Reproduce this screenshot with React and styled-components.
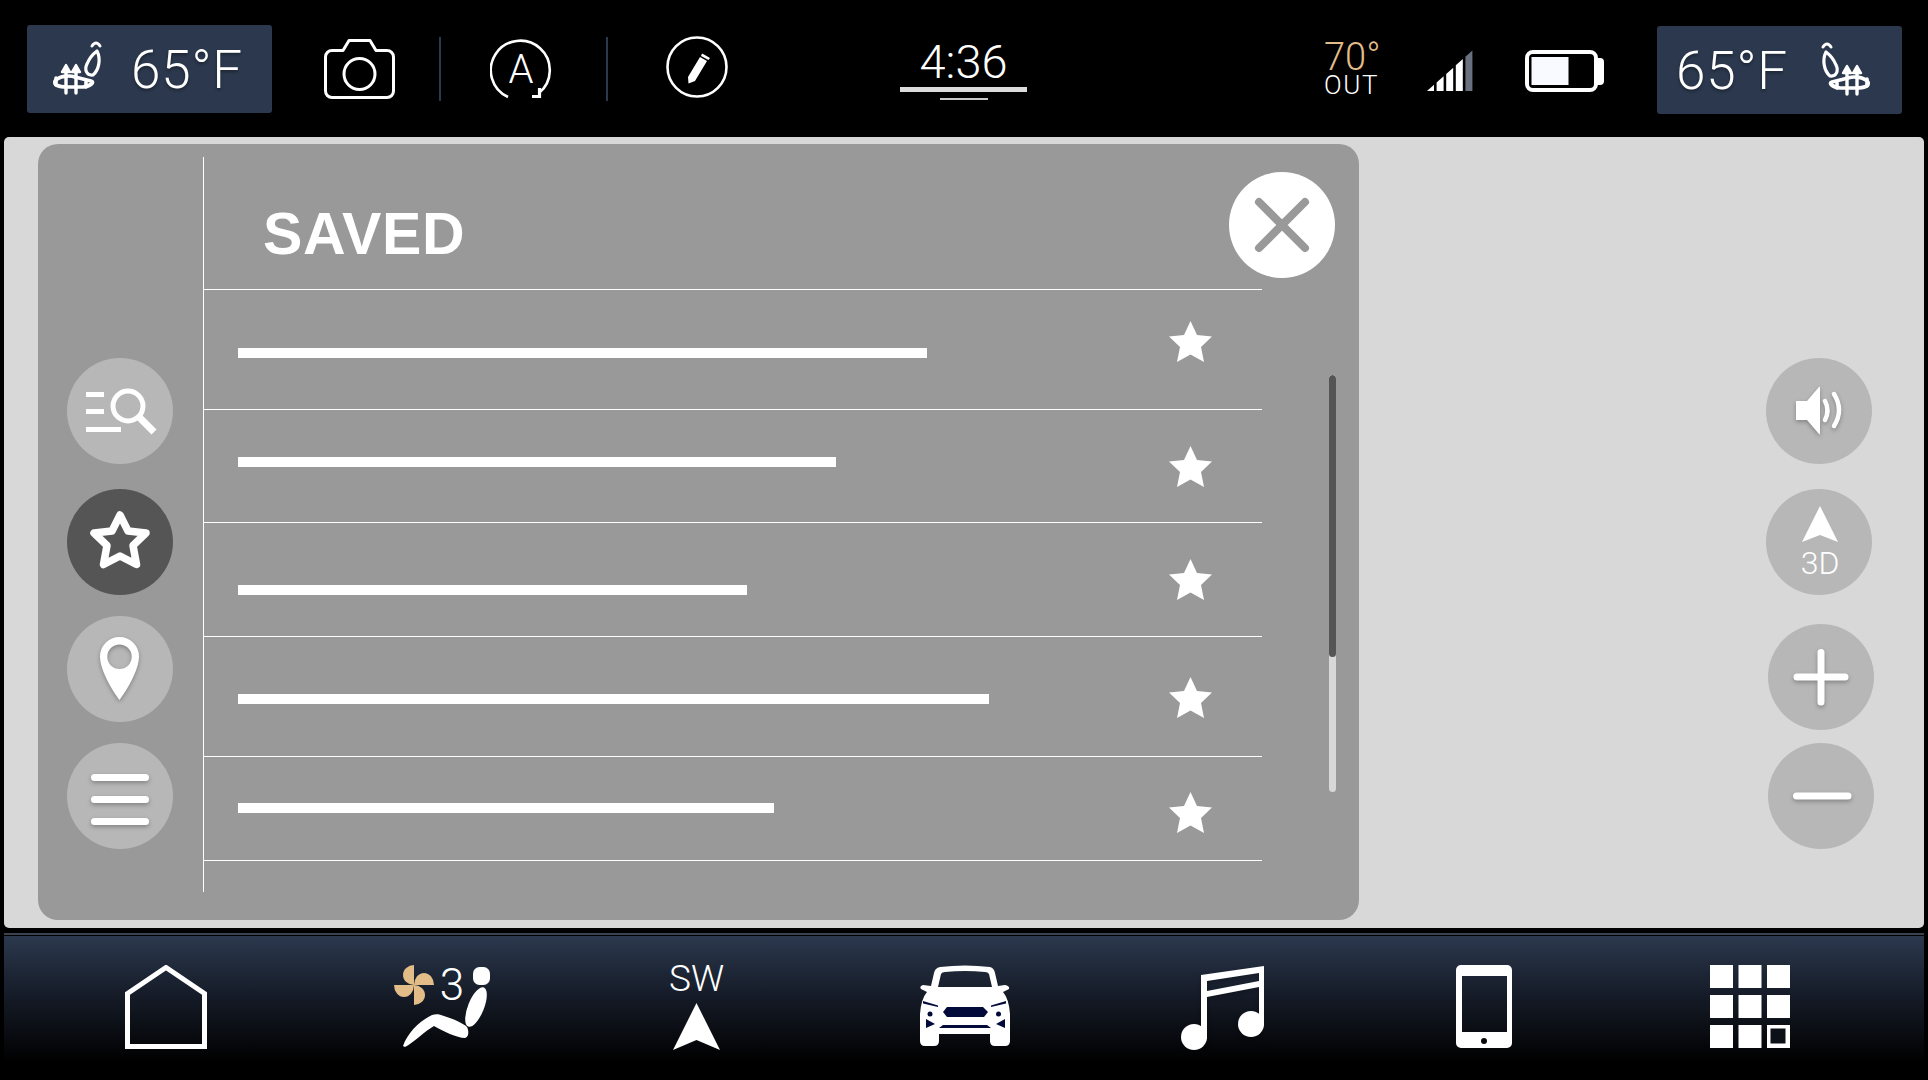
import React from "react";
import styled, { createGlobalStyle } from "styled-components";

const Global = createGlobalStyle`
  html, body { margin: 0; padding: 0; background: #000; overflow: hidden; }
  #root { width: 1928px; height: 1080px; }
`;

const FONT = `Roboto, Lato, "Liberation Sans", sans-serif`;

const Page = styled.div`
  width: 1928px;
  height: 1080px;
  box-sizing: border-box;
  padding: 0 4px;
  background: #000;
  display: flex;
  flex-direction: column;
  font-family: ${FONT};
  color: #fff;
`;

/* ---------- status bar ---------- */
const StatusBar = styled.header`
  height: 137px;
  flex: none;
  display: flex;
  align-items: center;
`;

const Climate = styled.div`
  width: 245px;
  height: 88px;
  margin-left: ${(p) => p.$left || 0}px;
  margin-top: ${(p) => p.$top || 0}px;
  flex: none;
  box-sizing: border-box;
  padding: 0 ${(p) => (p.$mirror ? 24 : 0)}px 0 ${(p) => (p.$mirror ? 19 : 18)}px;
  border-radius: 3px;
  background: #2b384d;
  display: flex;
  align-items: center;
  justify-content: ${(p) => (p.$mirror ? "space-between" : "flex-start")};
  gap: 16px;
`;

const Temp = styled.span`
  font-size: 53px;
  font-weight: 300;
  line-height: 1;
  letter-spacing: 0.8px;
  margin-top: 4px;
  text-shadow: 0 2px 3px rgba(0, 0, 0, 0.35);
`;

const BarIcon = styled.svg`
  flex: none;
  display: block;
  margin-left: ${(p) => p.$left || 0}px;
  margin-top: ${(p) => p.$top || 0}px;
`;

const Separator = styled.div`
  width: 2px;
  height: 64px;
  flex: none;
  margin-left: ${(p) => p.$left}px;
  background: #2b384d;
`;

const Clock = styled.div`
  width: 127px;
  flex: none;
  margin-left: 172px;
  margin-top: 3px;
  display: flex;
  flex-direction: column;
  align-items: center;
`;

const ClockText = styled.div`
  font-size: 47px;
  font-weight: 300;
  line-height: 44px;
  height: 44px;
`;

const ClockBar = styled.div`
  width: 100%;
  height: 5px;
  margin-top: 3px;
  background: #dcdcdc;
`;

const ClockTick = styled.div`
  width: 48px;
  height: 2px;
  margin-top: 6px;
  background: #c9c9c9;
`;

const Outside = styled.div`
  width: 58px;
  flex: none;
  margin-left: 297px;
  display: flex;
  flex-direction: column;
  margin-top: 2px;
`;

const OutTemp = styled.div`
  font-size: 38px;
  font-weight: 300;
  line-height: 31px;
  height: 31px;
  color: #e3bd87;
`;

const OutLabel = styled.div`
  font-size: 26px;
  font-weight: 300;
  letter-spacing: 1.6px;
  line-height: 25px;
`;

/* ---------- main ---------- */
const Main = styled.main`
  height: 791px;
  flex: none;
  border-radius: 5px;
  background: #d8d8d8;
  display: flex;
`;

const Panel = styled.section`
  position: relative;
  width: 1321px;
  height: 776px;
  margin: 7px 0 0 34px;
  flex: none;
  border-radius: 20px;
  background: #999;
  display: flex;
`;

const Sidebar = styled.nav`
  width: 165px;
  flex: none;
  box-sizing: border-box;
  padding: 214px 0 0 29px;
  display: flex;
  flex-direction: column;
`;

const Circle = styled.div`
  width: 106px;
  height: 106px;
  flex: none;
  margin-top: ${(p) => p.$gap || 0}px;
  border-radius: 50%;
  background: ${(p) => (p.$active ? "#555" : "#b7b7b7")};
  & > svg { display: block; }
`;

const Content = styled.div`
  width: 1058px;
  height: 735px;
  flex: none;
  margin-top: 13px;
  border-left: 1px solid #fff;
`;

const Header = styled.div`
  height: 132px;
  box-sizing: border-box;
  padding: 42px 0 0 59px;
`;

const Title = styled.h1`
  margin: 0;
  font-family: "Liberation Sans", Arial, sans-serif;
  font-size: 59px;
  font-weight: 700;
  letter-spacing: 0.7px;
  line-height: 70px;
  color: #fff;
`;

const List = styled.div`
  margin-left: -1px;
  border-bottom: 1px solid #fff;
`;

const Row = styled.div`
  height: ${(p) => p.$h}px;
  box-sizing: border-box;
  border-top: 1px solid #fff;
  display: grid;
  grid-template-columns: 966px 43px;
  align-items: start;
`;

const LineBar = styled.div`
  height: 10px;
  margin: ${(p) => p.$top - 1}px 0 0 35px;
  background: #fff;
`;

const StarIcon = styled.svg`
  display: block;
  margin-top: ${(p) => p.$top - 1}px;
`;

const Scroll = styled.div`
  width: 7px;
  height: 417px;
  flex: none;
  margin: 231px 0 0 67px;
  border-radius: 4px;
  background: #d8d8d8;
  overflow: hidden;
`;

const Thumb = styled.div`
  height: 282px;
  border-radius: 4px;
  background: #555;
`;

const Close = styled.button`
  position: absolute;
  left: 1191px;
  top: 28px;
  width: 106px;
  height: 106px;
  padding: 0;
  border: 0;
  border-radius: 50%;
  background: #fff;
  & > svg { display: block; }
`;

const MapControls = styled.div`
  width: 108px;
  flex: none;
  margin-left: 407px;
  padding-top: 221px;
  display: flex;
  flex-direction: column;
`;

const ZoomCircle = styled(Circle)`
  margin-left: 2px;
`;

/* ---------- bottom nav ---------- */
const Divider = styled.div`
  height: 2px;
  flex: none;
  margin: 5px 0 1px;
  background: #3a4250;
`;

const BottomNav = styled.footer`
  flex: 1;
  box-sizing: border-box;
  padding: 23px 0 0 121px;
  display: flex;
  align-items: flex-start;
  background: linear-gradient(#2b384d 0%, #151b27 42%, #000 88%);
`;

const NavIcon = styled.svg`
  flex: none;
  display: block;
  margin-left: ${(p) => p.$left || 0}px;
  margin-top: ${(p) => p.$top || 0}px;
`;

const Compass = styled.div`
  width: 55px;
  flex: none;
  margin: 4px 0 0 174px;
  display: flex;
  flex-direction: column;
  align-items: center;
`;

const CompassLabel = styled.div`
  font-size: 37px;
  font-weight: 300;
  line-height: 32px;
  height: 40px;
`;

/* ---------- icons ---------- */
const shadow = { filter: "drop-shadow(0 2px 2px rgba(0,0,0,.28))" };

const SeatHeat = ({ mirror }) => (
  <BarIcon width="70" height="70" viewBox="0 0 70 70" fill="none" stroke="#fff" strokeLinecap="round" strokeLinejoin="round"
    style={mirror ? { transform: "scaleX(-1)" } : undefined}>
    <path d="M47 12Q51 6 55 12" strokeWidth="3" />
    <path d="M52 17C56 25 54 36 48 41C42 42 39 36 42 30C44 25 48 20 52 17Z" strokeWidth="3.2" />
    <path d="M10 47C14 42 24 41 30 43L46 47C50 48 46 52 38 53L22 53C14 53 8 51 10 47Z" strokeWidth="3.6" />
    <path d="M21 34V59M31 34V59" strokeWidth="3.4" />
    <path d="M17 38L21 31L25 38ZM27 38L31 31L35 38Z" fill="#fff" strokeWidth="2.4" />
    <path d="M11 44V51M41 48V53" strokeWidth="3.6" />
  </BarIcon>
);

const FilledStar = ({ top }) => (
  <StarIcon $top={top} width="43" height="41" viewBox="0 0 43 41">
    <path fill="#fff" d="M21.5 0L28 14L43 15.6L32 26L35 41L21.5 33.5L8 41L11 26L0 15.6L15 14Z" />
  </StarIcon>
);

const rows = [
  { h: 120, bar: 59, w: 689, star: 32 },
  { h: 113, bar: 48, w: 598, star: 37 },
  { h: 114, bar: 63, w: 509, star: 37 },
  { h: 120, bar: 58, w: 751, star: 41 },
  { h: 104, bar: 47, w: 536, star: 36 },
];

const signalBars = [0, 1, 2, 3, 4].map((i) => {
  const x = i * 9.6;
  const y = (v) => 41 - (41 * v) / 46;
  return { i, points: `${x},41 ${x},${y(x)} ${x + 7},${y(x + 7)} ${x + 7},41` };
});

const grid = [0, 1, 2].flatMap((r) => [0, 1, 2].map((c) => ({ r, c })));

export default function App() {
  return (
    <Page>
      <Global />
      <StatusBar>
        <Climate $left={23}>
          <SeatHeat />
          <Temp>65°F</Temp>
        </Climate>

        <BarIcon $left={52} width="71" height="60" viewBox="0 0 71 60" fill="none" stroke="#fff" strokeWidth="3">
          <path d="M8 11.5H19L25 1.5H46L52 11.5H63A6.5 6.5 0 0 1 69.5 18V52A6.5 6.5 0 0 1 63 58.5H8A6.5 6.5 0 0 1 1.5 52V18A6.5 6.5 0 0 1 8 11.5Z" strokeLinejoin="round" />
          <circle cx="35.5" cy="35" r="15.5" />
        </BarIcon>
        <Separator $left={44} />

        <BarIcon $left={49} width="62" height="62" viewBox="0 0 62 62" fill="none" stroke="#fff" strokeWidth="2.6">
          <path d="M18 59A29.5 29.5 0 1 1 49 55" />
          <path d="M49.5 50V58.5H42" strokeWidth="3.2" />
          <text x="31" y="45" textAnchor="middle" fontFamily={FONT} fontSize="40" fontWeight="300" fill="#fff" stroke="none">A</text>
        </BarIcon>
        <Separator $left={54} />

        <BarIcon $left={58} width="62" height="62" viewBox="0 0 62 62" fill="none" $top={-3}>
          <circle cx="31" cy="31" r="29.5" stroke="#fff" strokeWidth="2.6" />
          <path fill="#fff" d="M34 21L41 25L29 45L22.5 47.5L22 41ZM36 17.5L38 18.5L44 22L42.5 24L35 20Z" />
        </BarIcon>

        <Clock>
          <ClockText>4:36</ClockText>
          <ClockBar />
          <ClockTick />
        </Clock>

        <Outside>
          <OutTemp>70°</OutTemp>
          <OutLabel>OUT</OutLabel>
        </Outside>

        <BarIcon $left={45} $top={3} width="46" height="41" viewBox="0 0 46 41">
          {signalBars.map((b) => (
            <polygon key={b.i} points={b.points} fill={b.i === 4 ? "#697080" : "#fff"} />
          ))}
        </BarIcon>

        <BarIcon $left={52} $top={4} width="79" height="42" viewBox="0 0 79 42">
          <rect x="2" y="2" width="69" height="38" rx="6" fill="none" stroke="#fff" strokeWidth="4" />
          <rect x="6.5" y="7" width="37" height="28" fill="#f8faff" />
          <path fill="#fff" d="M72 8H75A4 4 0 0 1 79 12V31A4 4 0 0 1 75 35H72Z" />
        </BarIcon>

        <Climate $left={53} $top={2} $mirror>
          <Temp>65°F</Temp>
          <SeatHeat mirror />
        </Climate>
      </StatusBar>

      <Main>
        <Panel>
          <Sidebar>
            <Circle>
              <svg width="106" height="106" viewBox="0 0 106 106" fill="none" stroke="#fff">
                <path d="M19 36.5H37M19 53.5H37M19 71.5H54" strokeWidth="5" />
                <circle cx="61" cy="48" r="15" strokeWidth="5" />
                <path d="M72 59L87 74" strokeWidth="7" />
              </svg>
            </Circle>
            <Circle $active $gap={25}>
              <svg width="106" height="106" viewBox="0 0 106 106">
                <path fill="none" stroke="#fff" strokeWidth="7.5" strokeLinejoin="round" d="M53 26L61 42L79 44L66 56.5L69.5 75.5L53 67L36.5 75.5L40 56.5L27 44L45 42Z" />
              </svg>
            </Circle>
            <Circle $gap={21}>
              <svg width="106" height="106" viewBox="0 0 106 106" style={shadow}>
                <path fill="#fff" fillRule="evenodd" d="M52.5 84C45 74 33 54 33 40.5A19.5 19.5 0 0 1 72 40.5C72 54 60 74 52.5 84ZM52.5 28.5A12.2 12.2 0 1 0 52.5 53A12.2 12.2 0 1 0 52.5 28.5Z" />
              </svg>
            </Circle>
            <Circle $gap={21}>
              <svg width="106" height="106" viewBox="0 0 106 106" style={shadow} stroke="#fff" strokeWidth="7" strokeLinecap="round">
                <path d="M27.5 34.5H78.5M27.5 56.5H78.5M27.5 78.5H78.5" />
              </svg>
            </Circle>
          </Sidebar>

          <Content>
            <Header>
              <Title>SAVED</Title>
            </Header>
            <List>
              {rows.map((r) => (
                <Row key={r.w} $h={r.h}>
                  <LineBar $top={r.bar} style={{ width: r.w }} />
                  <FilledStar top={r.star} />
                </Row>
              ))}
            </List>
          </Content>

          <Scroll>
            <Thumb />
          </Scroll>

          <Close aria-label="Close">
            <svg width="106" height="106" viewBox="0 0 106 106" stroke="#999" strokeWidth="8" strokeLinecap="round">
              <path d="M30 30L76 76M76 30L30 76" />
            </svg>
          </Close>
        </Panel>

        <MapControls>
          <Circle>
            <svg width="106" height="106" viewBox="0 0 106 106" style={shadow}>
              <path fill="#fff" d="M30 43H41L53 29Q54 28 54 30V75Q54 77 53 76L41 62H30Z" />
              <path fill="none" stroke="#fff" strokeWidth="4.5" strokeLinecap="round" d="M59 43Q64 52.5 59 62M68 36Q78 52 68 68" />
            </svg>
          </Circle>
          <Circle $gap={25}>
            <svg width="106" height="106" viewBox="0 0 106 106">
              <path fill="#fff" d="M54 17L72 53L54 46L36 53Z" strokeLinejoin="round" />
              <text x="54" y="85" textAnchor="middle" fontFamily={FONT} fontWeight="300" fontSize="32" fill="#fff">3D</text>
            </svg>
          </Circle>
          <ZoomCircle $gap={29}>
            <svg width="106" height="106" viewBox="0 0 106 106" style={shadow} stroke="#fff" strokeWidth="7" strokeLinecap="round">
              <path d="M29 53H77M53 28.5V78" />
            </svg>
          </ZoomCircle>
          <ZoomCircle $gap={13}>
            <svg width="106" height="106" viewBox="0 0 106 106" style={shadow} stroke="#fff" strokeWidth="7" strokeLinecap="round">
              <path d="M28.5 53H80" />
            </svg>
          </ZoomCircle>
        </MapControls>
      </Main>

      <Divider />

      <BottomNav>
        <NavIcon $top={6} width="82" height="84" viewBox="0 0 82 84" fill="none" stroke="#fff" strokeWidth="5">
          <path d="M2.5 28.5L41 2.5L79.5 28.5V81.5H2.5Z" />
        </NavIcon>

        <NavIcon $left={178} width="110" height="95" viewBox="0 0 110 95">
          <g fill="#e3bd87">
            <path d="M29 6A11 10 0 0 0 29 26Z" />
            <path d="M49 26A10 12 0 0 0 29 26Z" />
            <path d="M29 26A11 10 0 0 1 29 46Z" />
            <path d="M9 26A10 12 0 0 0 29 26Z" />
          </g>
          <text x="67" y="41" textAnchor="middle" fontFamily={FONT} fontWeight="300" fontSize="44" fill="#fff">3</text>
          <g fill="#fff">
            <rect x="88" y="8" width="17" height="18" rx="6.5" />
            <ellipse cx="91" cy="48" rx="8" ry="21" transform="rotate(22 91 48)" />
            <path d="M18 87C22 75 34 62 47 56C50 55 54 55 56 56C66 59 78 64 82 68C84 72 84 78 80 79C72 79 58 72 49 67C40 72 28 84 20 88Z" />
          </g>
        </NavIcon>

        <Compass>
          <CompassLabel>SW</CompassLabel>
          <svg width="47" height="48" viewBox="0 0 47 48">
            <path fill="#fff" d="M23.5 0L47 47L23.5 37L0 47Z" />
          </svg>
        </Compass>

        <NavIcon $left={186} width="110" height="95" viewBox="0 0 110 95">
          <path fill="#fff" fillRule="evenodd" d="M30 8Q55 5 80 8Q84 9 85 14L88 27L95 26Q100 27 99 30L93 33Q99 40 100 55V82Q100 87 95 87H85Q80 87 80 82V75H29V82Q29 87 24 87H15Q10 87 10 82V55Q11 40 17 33L11 30Q9 27 13 26L21 27L24 14Q25 9 30 8ZM28 28H82L79 15Q78 13 75 13Q55 11 35 13Q32 13 31 15Z" />
          <g fill="#020a3a">
            <path d="M33 53L37 48H73L78 53L74 58H37Z" />
            <path d="M29 69L33 66H77L81 69Z" />
            <path d="M13 42L28 46.5V48L13 44.5ZM96 42L81 46.5V48L96 44.5Z" />
            <circle cx="20" cy="55" r="2.5" />
            <circle cx="88.5" cy="55" r="2.5" />
            <path d="M16 60L25 65L16 69ZM95 60L86 65L95 69Z" />
          </g>
        </NavIcon>

        <NavIcon $left={160} $top={7} width="84" height="84" viewBox="0 0 84 84">
          <g fill="#fff" style={shadow}>
            <path d="M21 9L84 0V60H79V21L27 31V73H21ZM27 15V25L79 15V7Z" fillRule="evenodd" />
            <ellipse cx="14" cy="71" rx="13" ry="13" />
            <ellipse cx="71" cy="58" rx="13" ry="13" />
          </g>
        </NavIcon>

        <NavIcon $left={192} $top={6} width="56" height="83" viewBox="0 0 56 83">
          <path fill="#fff" fillRule="evenodd" d="M5 0H51A5 5 0 0 1 56 5V78A5 5 0 0 1 51 83H5A5 5 0 0 1 0 78V5A5 5 0 0 1 5 0ZM6 11V67H51V11ZM28 73A3 3 0 1 0 28 79A3 3 0 1 0 28 73Z" />
        </NavIcon>

        <NavIcon $left={198} $top={6} width="80" height="83" viewBox="0 0 80 83">
          {grid.map(({ r, c }) => (
            <rect key={`${r}-${c}`} x={c * 28.5} y={r * 30} width="23" height="23" fill="#fff" />
          ))}
          <rect x="60.5" y="63.5" width="15" height="15" fill="#0c1017" />
        </NavIcon>
      </BottomNav>
    </Page>
  );
}
